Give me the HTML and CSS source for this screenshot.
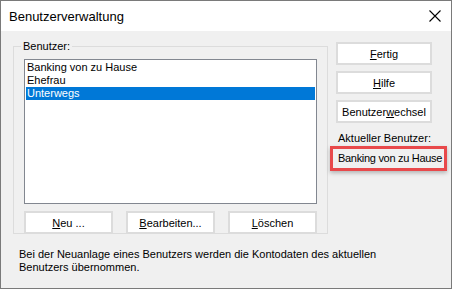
FILE: index.html
```html
<!DOCTYPE html>
<html lang="de">
<head>
  <meta charset="UTF-8">
  <title>Benutzerverwaltung</title>
  <link rel="stylesheet" href="styles.css">
</head>
<body>

  <div class="window">
    <div class="titlebar">
      <span class="title">Benutzerverwaltung</span>
      <svg class="close" width="12" height="12" viewBox="0 0 12 12">
        <path d="M0.5 0.5 L11.5 11.5 M11.5 0.5 L0.5 11.5" stroke="#000" stroke-width="1.1" fill="none"/>
      </svg>
    </div>

    <div class="content">
      <div class="main">
        <fieldset class="group">
          <legend>Benutzer:</legend>
          <div class="list">
            <div class="item">Banking von zu Hause</div>
            <div class="item">Ehefrau</div>
            <div class="item selected">Unterwegs</div>
          </div>
          <div class="list-buttons">
            <button><u>N</u>eu ...</button>
            <button><u>B</u>earbeiten...</button>
            <button><u>L</u>öschen</button>
          </div>
        </fieldset>

        <div class="side">
          <button><u>F</u>ertig</button>
          <button><u>H</u>ilfe</button>
          <button>Benutzer<u>w</u>echsel</button>
          <div class="current-label">Aktueller Benutzer:</div>
          <div class="current">Banking von zu Hause</div>
        </div>
      </div>

      <p class="note">Bei der Neuanlage eines Benutzers werden die Kontodaten des aktuellen<br>Benutzers übernommen.</p>
    </div>
  </div>

</body>
</html>
```

FILE: styles.css
```css
body {
  margin: 0;
  font-family: 'Liberation Sans', Arial, sans-serif;
  font-size: 11px;
  color: #000;
}

.window {
  width: 452px;
  height: 289px;
  box-sizing: border-box;
  border: 1px solid #7a7a7a;
  background: #f0f0f0;
  display: flex;
  flex-direction: column;
}

.titlebar {
  height: 30px;
  background: #fff;
  display: flex;
  align-items: center;
  justify-content: space-between;
  padding: 0 10px 0 8px;
  flex-shrink: 0;
}

.title {
  font-size: 13px;
  margin-top: 1px;
}

.close {
  display: block;
}

.content {
  padding: 9px 0 0 12px;
}

.main {
  display: flex;
  align-items: flex-start;
}

.group {
  width: 293px;
  height: 186px;
  margin: 0;
  padding: 6px 10px 0 10px;
  border: 1px solid #dcdcdc;
}

.group legend {
  padding: 0 2px;
  margin-left: -3px;
  line-height: 13px;
}

.list {
  height: 145px;
  box-sizing: border-box;
  border: 1px solid #828790;
  background: #fff;
  padding: 1px;
}

.item {
  height: 13px;
  line-height: 13px;
  padding-left: 1px;
}

.item.selected {
  background: #0078d7;
  color: #fff;
}

.list-buttons {
  display: grid;
  grid-template-columns: repeat(3, 1fr);
  column-gap: 13px;
  margin-top: 7px;
}

button {
  height: 23px;
  box-sizing: border-box;
  border: 2px solid #dcdcdc;
  background: #fff;
  font-family: 'Liberation Sans', Arial, sans-serif;
  font-size: 11px;
  color: #000;
  padding: 0;
}

.side {
  display: flex;
  flex-direction: column;
  width: 96px;
  margin-left: 8px;
  padding-top: 2px;
}

.side button {
  margin-bottom: 6px;
}

.current-label {
  margin-top: 3px;
  padding-left: 2px;
  line-height: 13px;
}

.current {
  margin: 1px 0 0 -6px;
  width: 117px;
  height: 25px;
  box-sizing: border-box;
  border: 3px solid #e8494b;
  box-shadow: 0 2px 4px rgba(0, 0, 0, 0.25);
  background: #f0f0f0;
  line-height: 19px;
  padding-left: 5px;
  letter-spacing: -0.3px;
  white-space: nowrap;
}

.note {
  margin: 14px 0 0 6px;
  line-height: 13px;
}
```
